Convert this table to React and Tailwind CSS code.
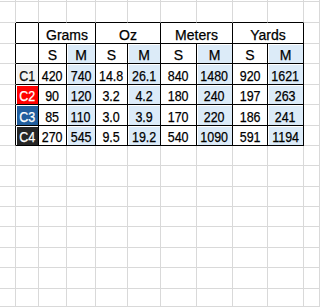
import React from "react";

// sheet is 11 columns x 16 rows; the table sits in rows 2..7, cols 1..9
const COLS = 11;
const ROWS = 16;
const T_TOP = 2;
const T_BOTTOM = 7;
const T_LEFT = 1;
const T_RIGHT = 9;

const labels = [
  { name: "C1", fill: "bg-[#f2f2f2]", text: "text-[#111]" },
  { name: "C2", fill: "bg-[#ff0000]", text: "text-white" },
  { name: "C3", fill: "bg-[#215e9e]", text: "text-white" },
  { name: "C4", fill: "bg-[#262626]", text: "text-white" },
];

const data = [
  ["420", "740", "14.8", "26.1", "840", "1480", "920", "1621"],
  ["90", "120", "3.2", "4.2", "180", "240", "197", "263"],
  ["85", "110", "3.0", "3.9", "170", "220", "186", "241"],
  ["270", "545", "9.5", "19.2", "540", "1090", "591", "1194"],
];

const groups = ["Grams", "Oz", "Meters", "Yards"];

function clsx(...parts) {
  return parts.filter(Boolean).join(" ");
}

function inTable(r, c) {
  return r >= T_TOP && r <= T_BOTTOM && c >= T_LEFT && c <= T_RIGHT;
}

function Cell({ r, c, span = 1, children, fill = "", text = "", wide = false }) {
  const lastCol = c + span - 1;
  const darkRight = inTable(r, lastCol) || inTable(r, lastCol + 1);
  const darkBottom = inTable(r, c) || inTable(r + 1, c);
  return (
    <div
      className={clsx(
        "flex items-end justify-center pb-[1px] leading-[14px] border-r border-b whitespace-nowrap [-webkit-text-stroke:0.25px]",
        span === 2 && "col-span-2",
        darkRight ? "border-r-black" : "border-r-[#d9d9d9]",
        darkBottom ? "border-b-black" : "border-b-[#d9d9d9]",
        fill && `${fill} shadow-[inset_1px_1px_0_white]`,
        wide ? "text-[14px]" : "text-[14.5px]",
        text
      )}
    >
      {children != null &&
        (wide ? children : <span className="inline-block scale-x-[0.86]">{children}</span>)}
    </div>
  );
}

export default function App() {
  const cells = [];
  for (let r = 0; r < ROWS; r++) {
    for (let c = 0; c < COLS; c++) {
      if (r === T_TOP && c > T_LEFT && c <= T_RIGHT) {
        // group headers span S and M
        if ((c - 2) % 2 === 0) {
          cells.push(
            <Cell key={`${r}-${c}`} r={r} c={c} span={2} wide>
              {groups[(c - 2) / 2]}
            </Cell>
          );
        }
        continue;
      }
      let content = null;
      let fill = "";
      let text = "";
      let wide = false;
      if (r === T_TOP + 1 && c > T_LEFT && c <= T_RIGHT) {
        const isM = (c - 2) % 2 === 1;
        content = isM ? "M" : "S";
        wide = true;
        if (isM) fill = "bg-[#dcebf8]";
      }
      if (r > T_TOP + 1 && r <= T_BOTTOM) {
        const i = r - T_TOP - 2;
        if (c === T_LEFT) {
          content = labels[i].name;
          fill = labels[i].fill;
          text = labels[i].text;
        } else if (c > T_LEFT && c <= T_RIGHT) {
          content = data[i][c - 2];
          if ((c - 2) % 2 === 1) fill = "bg-[#dcebf8]";
        }
      }
      cells.push(
        <Cell key={`${r}-${c}`} r={r} c={c} fill={fill} text={text} wide={wide}>
          {content}
        </Cell>
      );
    }
  }

  return (
    <div className="w-[320px] h-[307px] overflow-hidden bg-white text-black font-['Liberation_Sans',Arial,sans-serif]">
      <div className="grid grid-cols-[16px_23px_28px_29px_32px_33px_36px_36px_35px_36px_16px] grid-rows-[2px_21px_21px_20px_21px_20px_21px_20px_20px_21px_20px_20px_21px_20px_21px_18px]">
        {cells}
      </div>
    </div>
  );
}
